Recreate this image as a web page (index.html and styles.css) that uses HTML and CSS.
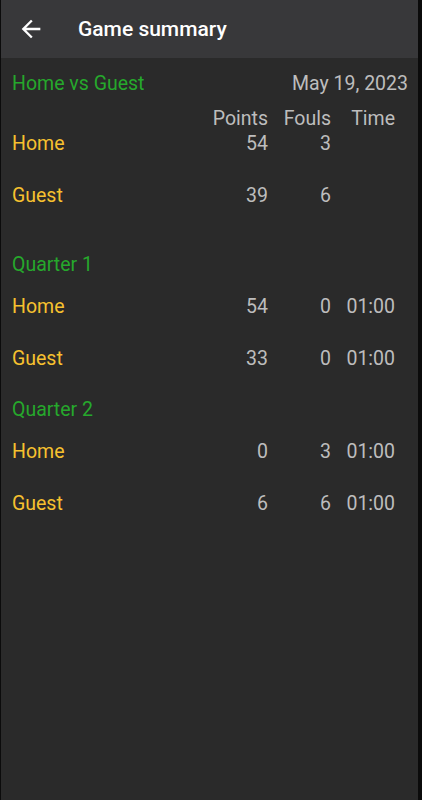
FILE: index.html
```html
<!DOCTYPE html>
<html lang="en">
<head>
<meta charset="UTF-8">
<title>Game summary</title>
<link rel="stylesheet" href="styles.css">
</head>
<body>

<div class="screen">
  <header class="appbar">
    <svg class="back" viewBox="0 0 24 24" width="28" height="28">
      <path d="M20 11H7.83l5.59-5.59L12 4l-8 8 8 8 1.41-1.41L7.83 13H20v-2z" fill="#fff"/>
    </svg>
    <h1>Game summary</h1>
  </header>

  <main class="summary">
    <div class="game">
      <div class="match">
        <span class="green">Home vs Guest</span>
        <span class="date">May 19, 2023</span>
      </div>
      <div class="row cols">
        <span></span><span>Points</span><span>Fouls</span><span>Time</span>
      </div>
      <div class="row">
        <span class="team">Home</span><span>54</span><span>3</span><span></span>
      </div>
      <div class="row">
        <span class="team">Guest</span><span>39</span><span>6</span><span></span>
      </div>
    </div>

    <div class="quarter">
      <div class="q-title green">Quarter 1</div>
      <div class="row">
        <span class="team">Home</span><span>54</span><span>0</span><span>01:00</span>
      </div>
      <div class="row">
        <span class="team">Guest</span><span>33</span><span>0</span><span>01:00</span>
      </div>
    </div>

    <div class="quarter">
      <div class="q-title green">Quarter 2</div>
      <div class="row">
        <span class="team">Home</span><span>0</span><span>3</span><span>01:00</span>
      </div>
      <div class="row">
        <span class="team">Guest</span><span>6</span><span>6</span><span>01:00</span>
      </div>
    </div>
  </main>
</div>

</body>
</html>
```

FILE: styles.css
```css
body {
  margin: 0;
  background: #0b0b0b;
  font-family: Roboto, "Liberation Sans", sans-serif;
}

.screen {
  margin: 0 4px 0 1px;
  min-height: 800px;
  background: #2a2a2a;
}

.appbar {
  height: 58px;
  background: #38383a;
  display: flex;
  align-items: center;
  padding-left: 16px;
}

.back {
  display: block;
}

.appbar h1 {
  margin: 0 0 0 33px;
  font-size: 21px;
  font-weight: 500;
  color: #fff;
}

.summary {
  padding: 14px 0 0 11px;
  font-size: 19.5px;
  line-height: 24px;
  color: #bdbdbd;
}

.green {
  color: #26a82c;
}

.match {
  display: flex;
  justify-content: space-between;
  padding-right: 10px;
}

.date {
  color: #bdbdbd;
}

.row {
  display: grid;
  grid-template-columns: 1fr 70px 63px 64px;
  height: 51.5px;
  padding-right: 23px;
}

.row span {
  text-align: right;
}

.row .team {
  text-align: left;
  color: #f6c12f;
}

.row.cols {
  margin-top: 11px;
  height: 25px;
}

.game {
  margin-bottom: 18px;
}

.q-title {
  height: 42px;
}
```
